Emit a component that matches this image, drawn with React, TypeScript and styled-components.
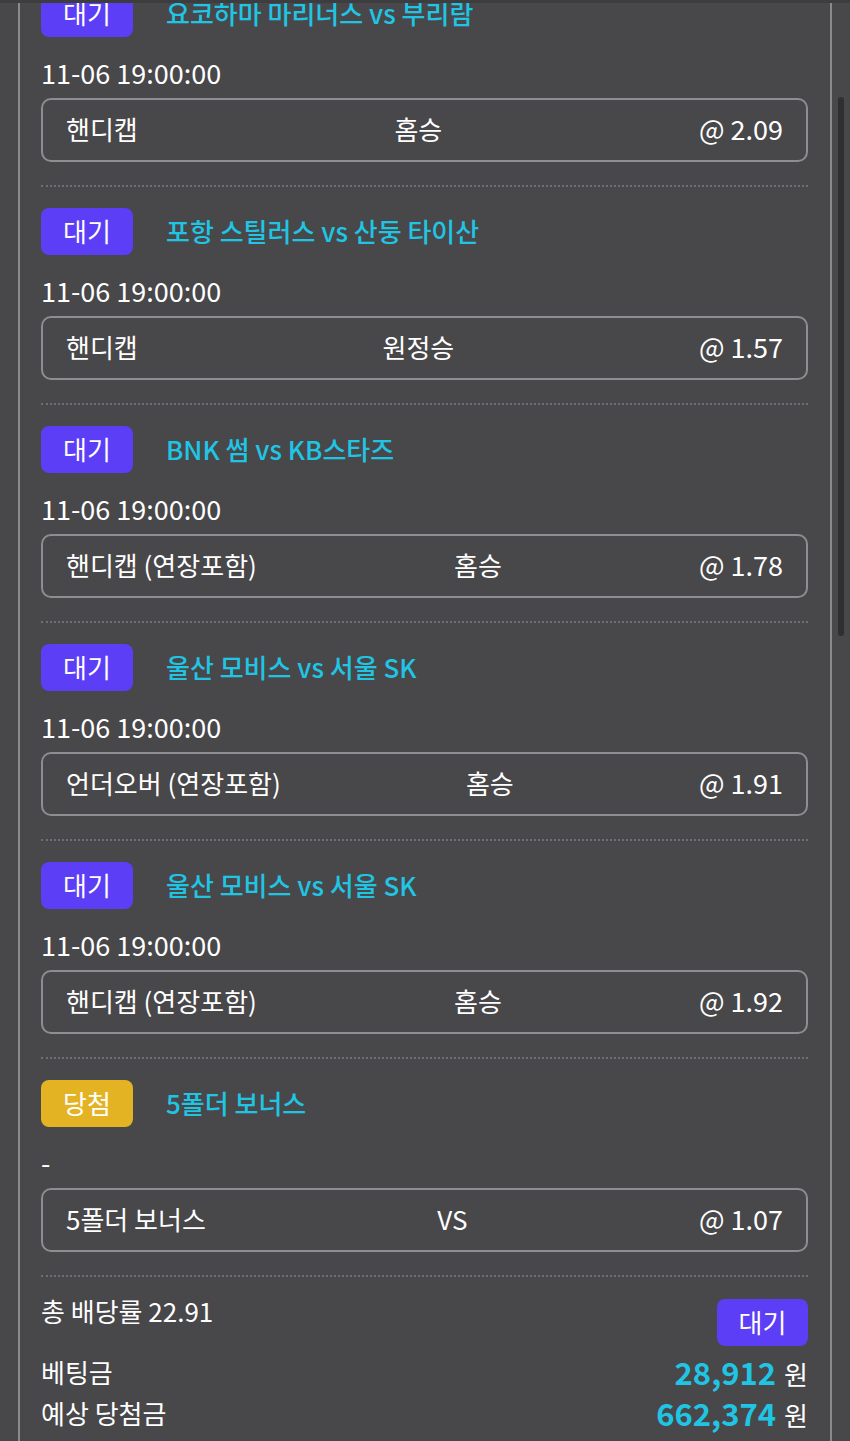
import React from "react";
import styled, { createGlobalStyle } from "styled-components";

const Global = createGlobalStyle`
  html, body {
    margin: 0;
    padding: 0;
    background: #48474a;
  }
  body {
    font-family: "Noto Sans CJK KR", "Noto Sans", sans-serif;
    color: #ffffff;
    overflow: hidden;
  }
`;

const TopEdge = styled.div`
  position: fixed;
  top: 0;
  left: 0;
  right: 0;
  height: 3px;
  background: #3d3c3f;
  z-index: 2;
`;

const Scrollbar = styled.div`
  position: fixed;
  left: 838px;
  top: 97px;
  width: 6px;
  height: 539px;
  border-radius: 3px;
  background: #2f2e31;
`;

const Panel = styled.div`
  margin: 0 18px;
  border-left: 2px solid #8a898c;
  border-right: 2px solid #8a898c;
  padding: 0 22px 40px 21px;
  min-height: 1441px;
  box-sizing: border-box;
`;

const List = styled.div`
  margin-top: -31px;
  display: flex;
  flex-direction: column;
`;

const Section = styled.section<{ $divider: boolean }>`
  padding: 21px 0 23px;
  border-top: ${(p) => (p.$divider ? "2px dotted #6f6e72" : "none")};
`;

const Head = styled.div`
  display: flex;
  align-items: center;
  gap: 33px;
  height: 47px;
`;

const Badge = styled.div<{ $tone: "wait" | "win" }>`
  width: 92px;
  height: 47px;
  border-radius: 8px;
  background: ${(p) => (p.$tone === "win" ? "#e3b324" : "#5b3ef5")};
  color: #ffffff;
  font-size: 26px;
  display: flex;
  align-items: center;
  justify-content: center;
  flex-shrink: 0;
  box-sizing: border-box;
  padding-bottom: 2px;
`;

const Title = styled.div`
  color: #20c5e4;
  font-size: 26px;
  font-weight: 500;
  white-space: nowrap;
  padding-bottom: 2px;
`;

const DateRow = styled.div`
  margin-top: 19px;
  height: 36px;
  line-height: 34px;
  font-size: 27px;
`;

const PickBox = styled.div`
  margin-top: 6px;
  height: 64px;
  box-sizing: border-box;
  border: 2px solid #8e8d91;
  border-radius: 10px;
  padding: 0 23px 3px;
  display: flex;
  align-items: center;
  justify-content: space-between;
  font-size: 26px;
  white-space: nowrap;
`;

const Odds = styled.span`
  font-size: 27px;
`;

const Summary = styled.div`
  border-top: 2px dotted #6f6e72;
  padding-top: 16px;
  display: flex;
  flex-direction: column;
`;

const SummaryTop = styled.div`
  display: flex;
  justify-content: space-between;
  align-items: flex-start;
  margin-bottom: 5px;
`;

const Label = styled.div`
  font-size: 26px;
  line-height: 36px;
`;

const StatusButton = styled.div`
  margin-top: 6px;
  width: 91px;
  height: 47px;
  border-radius: 8px;
  background: #5b3ef5;
  font-size: 26px;
  display: flex;
  align-items: center;
  justify-content: center;
  padding-bottom: 2px;
  box-sizing: border-box;
`;

const AmountRow = styled.div`
  display: flex;
  justify-content: space-between;
  align-items: center;
  height: 41px;
`;

const AmountLabel = styled.div`
  font-size: 26px;
`;

const Amount = styled.div`
  display: flex;
  align-items: baseline;
  gap: 8px;
  font-size: 26px;
`;

const AmountNum = styled.span`
  color: #20c5e4;
  font-size: 31px;
  font-weight: 700;
`;

type Bet = {
  status: "wait" | "win";
  title: string;
  date: string;
  market: string;
  pick: string;
  odds: string;
};

const bets: Bet[] = [
  { status: "wait", title: "요코하마 마리너스 vs 부리람", date: "11-06 19:00:00", market: "핸디캡", pick: "홈승", odds: "@ 2.09" },
  { status: "wait", title: "포항 스틸러스 vs 산둥 타이산", date: "11-06 19:00:00", market: "핸디캡", pick: "원정승", odds: "@ 1.57" },
  { status: "wait", title: "BNK 썸 vs KB스타즈", date: "11-06 19:00:00", market: "핸디캡 (연장포함)", pick: "홈승", odds: "@ 1.78" },
  { status: "wait", title: "울산 모비스 vs 서울 SK", date: "11-06 19:00:00", market: "언더오버 (연장포함)", pick: "홈승", odds: "@ 1.91" },
  { status: "wait", title: "울산 모비스 vs 서울 SK", date: "11-06 19:00:00", market: "핸디캡 (연장포함)", pick: "홈승", odds: "@ 1.92" },
  { status: "win", title: "5폴더 보너스", date: "-", market: "5폴더 보너스", pick: "VS", odds: "@ 1.07" },
];

export default function App() {
  return (
    <>
      <Global />
      <TopEdge />
      <Scrollbar />
      <Panel>
        <List>
          {bets.map((b, i) => (
            <Section key={i} $divider={i > 0}>
              <Head>
                <Badge $tone={b.status}>{b.status === "win" ? "당첨" : "대기"}</Badge>
                <Title>{b.title}</Title>
              </Head>
              <DateRow>{b.date}</DateRow>
              <PickBox>
                <span>{b.market}</span>
                <span>{b.pick}</span>
                <Odds>{b.odds}</Odds>
              </PickBox>
            </Section>
          ))}
        </List>
        <Summary>
          <SummaryTop>
            <Label>총 배당률 22.91</Label>
            <StatusButton>대기</StatusButton>
          </SummaryTop>
          <AmountRow>
            <AmountLabel>베팅금</AmountLabel>
            <Amount>
              <AmountNum>28,912</AmountNum>
              <span>원</span>
            </Amount>
          </AmountRow>
          <AmountRow>
            <AmountLabel>예상 당첨금</AmountLabel>
            <Amount>
              <AmountNum>662,374</AmountNum>
              <span>원</span>
            </Amount>
          </AmountRow>
        </Summary>
      </Panel>
    </>
  );
}
